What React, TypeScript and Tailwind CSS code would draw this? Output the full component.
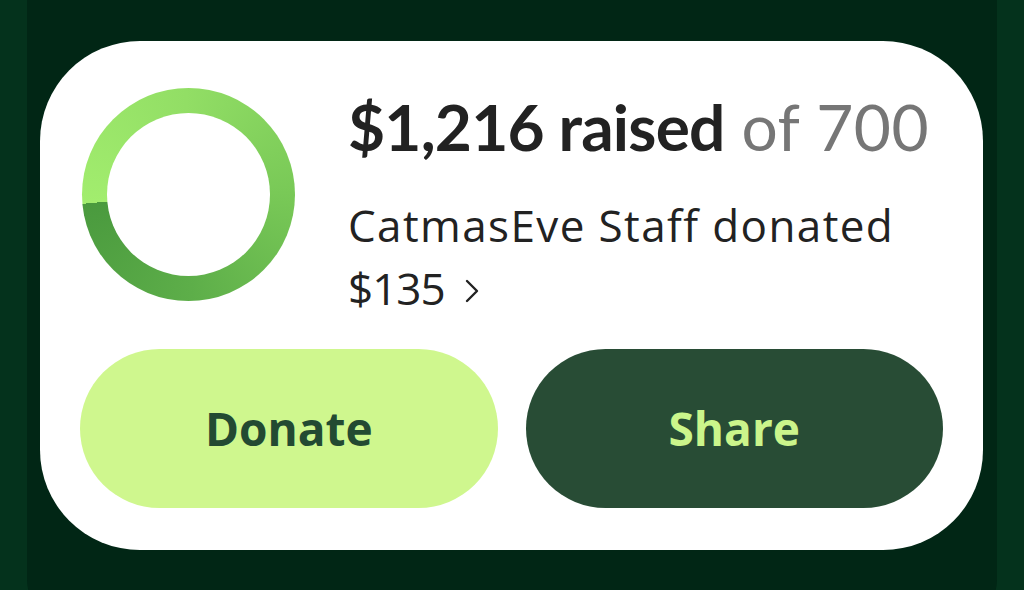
import React from "react";

export default function App() {
  return (
    <div className="w-[1024px] h-[590px] overflow-hidden bg-[#04321c] flex justify-start">
      <div className="ml-[27px] w-[970px] h-[620px] bg-[#012615] rounded-b-[40px] pt-[41px] pl-[13px]">
        <div className="w-[943px] h-[509px] bg-white rounded-[100px] pl-[40px] pr-[40px] pt-[47px] flex flex-col">
          <div className="flex">
            <div className="ml-[2px] w-[213px] h-[213px] rounded-full p-[25px] bg-[conic-gradient(from_265deg,#a2ed6e,#92de65_26%,#79c957_51%,#5dae49_76%,#4a9a3e)]">
              <div className="w-full h-full rounded-full bg-white" />
            </div>
            <div className="ml-[53px] flex flex-col">
              <div className="mt-[3px] text-[64px] leading-[72px] text-[#222222] whitespace-nowrap" style={{ fontFamily: "Lato, 'Open Sans', sans-serif" }}>
                <span className="font-bold tracking-[-0.8px]">$1,216 raised</span>
                <span className="text-[#767676] font-normal tracking-[0.5px]"> of 700</span>
              </div>
              <div className="mt-[31px] text-[44px] leading-[63px] text-[#222222]" style={{ fontFamily: "'Open Sans', sans-serif" }}>
                <div className="tracking-[1.4px]">CatmasEve Staff donated</div>
                <div className="flex items-center gap-[20px]">
                  <span className="tracking-[-1px]">$135</span>
                  <svg width="14" height="24" viewBox="0 0 14 24" className="mt-[4px]">
                    <path d="M2 2 L12 12 L2 22" fill="none" stroke="#222222" strokeWidth="2.4" strokeLinecap="round" strokeLinejoin="round" />
                  </svg>
                </div>
              </div>
            </div>
          </div>
          <div className="mt-auto mb-[42px] flex gap-[28px]">
            <button className="flex-1 h-[159px] rounded-full bg-[#cff78e] text-[#234a32] text-[46px] font-bold flex items-center justify-center" style={{ fontFamily: "'Open Sans', sans-serif" }}>
              Donate
            </button>
            <button className="flex-1 h-[159px] rounded-full bg-[#284c35] text-[#cbf58b] text-[46px] font-bold flex items-center justify-center" style={{ fontFamily: "'Open Sans', sans-serif" }}>
              Share
            </button>
          </div>
        </div>
      </div>
    </div>
  );
}
